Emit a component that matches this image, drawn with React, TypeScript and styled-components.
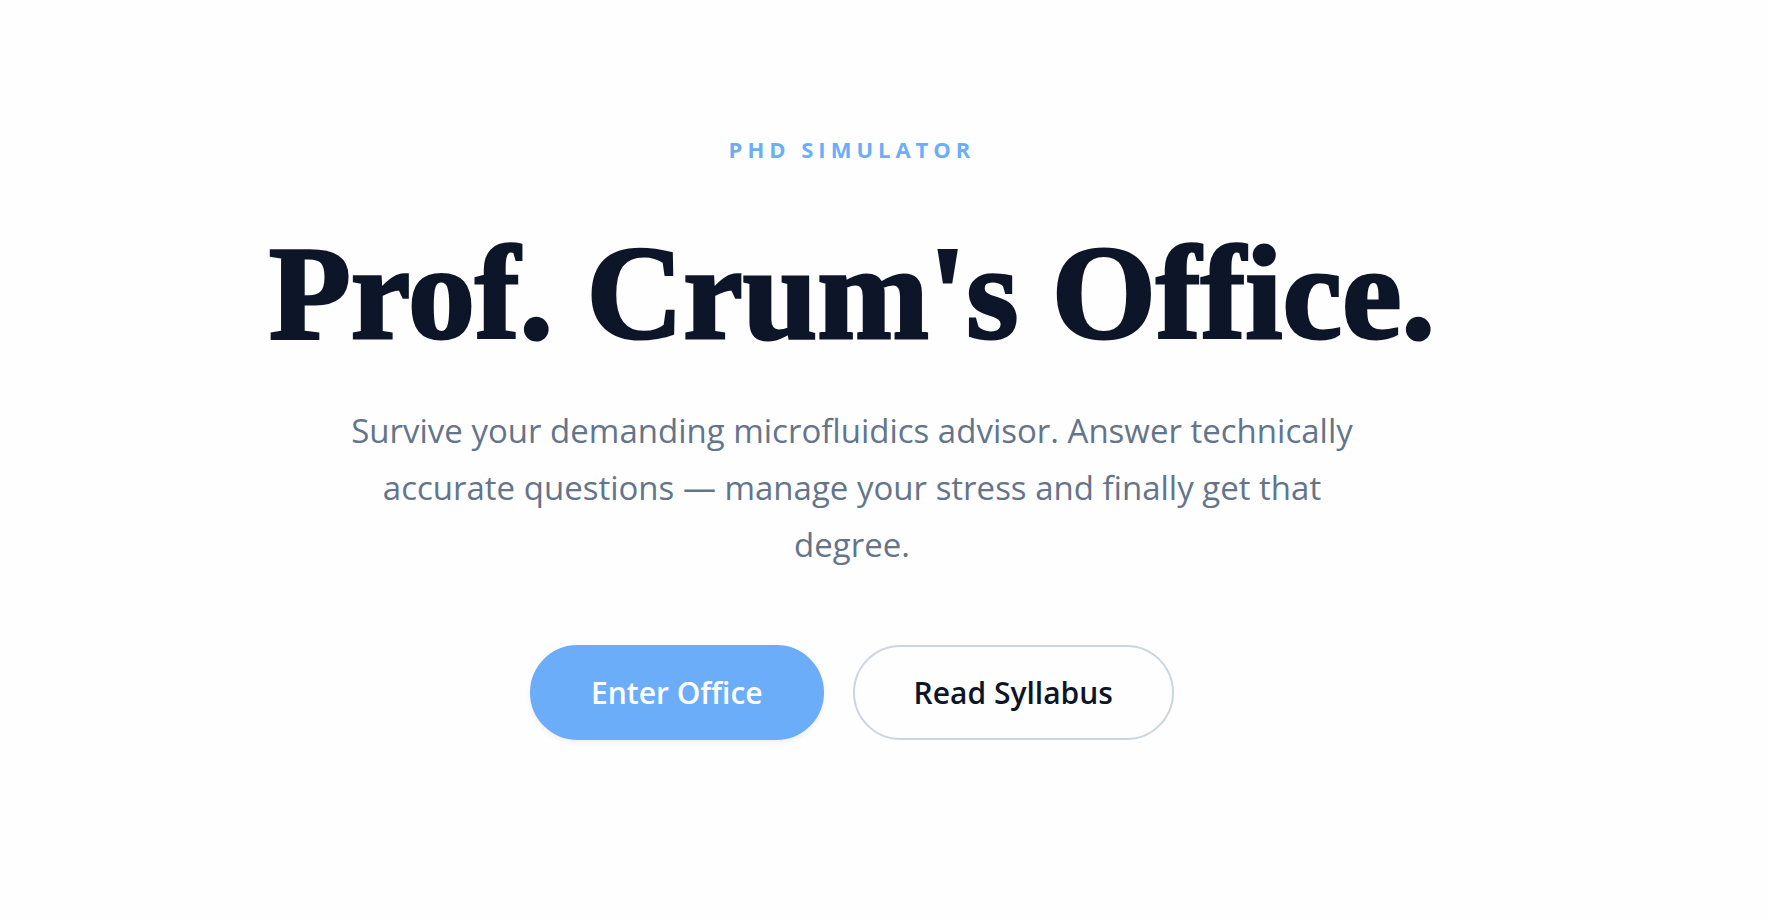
import React from "react";
import styled, { createGlobalStyle, css } from "styled-components";

const color = {
  page: "#fefefe",
  ink: "#0d1628",
  muted: "#64748b",
  accent: "#6cadfa",
  line: "#cbd5e1",
};

const GlobalStyle = createGlobalStyle`
  *, *::before, *::after {
    box-sizing: border-box;
  }

  body {
    margin: 0;
    background: ${color.page};
    color: ${color.ink};
    font-family: "Open Sans", "Liberation Sans", sans-serif;
    -webkit-font-smoothing: antialiased;
  }
`;

const Hero = styled.main`
  display: flex;
  flex-direction: column;
  align-items: center;
  min-height: 100vh;
  padding: 132px 64px 64px 0;
  text-align: center;
`;

const Eyebrow = styled.p`
  margin: 0 0 53px;
  color: ${color.accent};
  font-size: 22px;
  font-weight: 700;
  line-height: 34px;
  letter-spacing: 5px;
  text-transform: uppercase;
`;

const Title = styled.h1`
  margin: 0 0 35px;
  font-family: "Liberation Serif", serif;
  font-size: 134px;
  font-weight: 700;
  line-height: 148px;
  -webkit-text-stroke: 3px ${color.ink};
  paint-order: stroke fill;
`;

const Lead = styled.p`
  max-width: 1030px;
  margin: 0 0 72px;
  color: ${color.muted};
  font-size: 33px;
  line-height: 57px;
`;

const Actions = styled.div`
  display: flex;
  flex-wrap: wrap;
  justify-content: center;
  gap: 29px;
`;

const Button = styled.button<{ $variant: "primary" | "outline" }>`
  padding: 24px 59px;
  border: 2px solid transparent;
  border-radius: 48px;
  font-family: inherit;
  font-size: 30px;
  font-weight: 600;
  line-height: 43px;
  cursor: pointer;

  ${({ $variant }) =>
    $variant === "primary"
      ? css`
          border-color: ${color.accent};
          background: ${color.accent};
          color: #ffffff;
          box-shadow: 0 3px 5px rgba(15, 23, 42, 0.06);
        `
      : css`
          border-color: ${color.line};
          background: transparent;
          color: ${color.ink};
        `}
`;

export default function App() {
  return (
    <>
      <GlobalStyle />
      <Hero>
        <Eyebrow>PhD Simulator</Eyebrow>
        <Title>Prof. Crum's Office.</Title>
        <Lead>
          Survive your demanding microfluidics advisor. Answer technically
          accurate questions — manage your stress and finally get that degree.
        </Lead>
        <Actions>
          <Button type="button" $variant="primary">
            Enter Office
          </Button>
          <Button type="button" $variant="outline">
            Read Syllabus
          </Button>
        </Actions>
      </Hero>
    </>
  );
}
